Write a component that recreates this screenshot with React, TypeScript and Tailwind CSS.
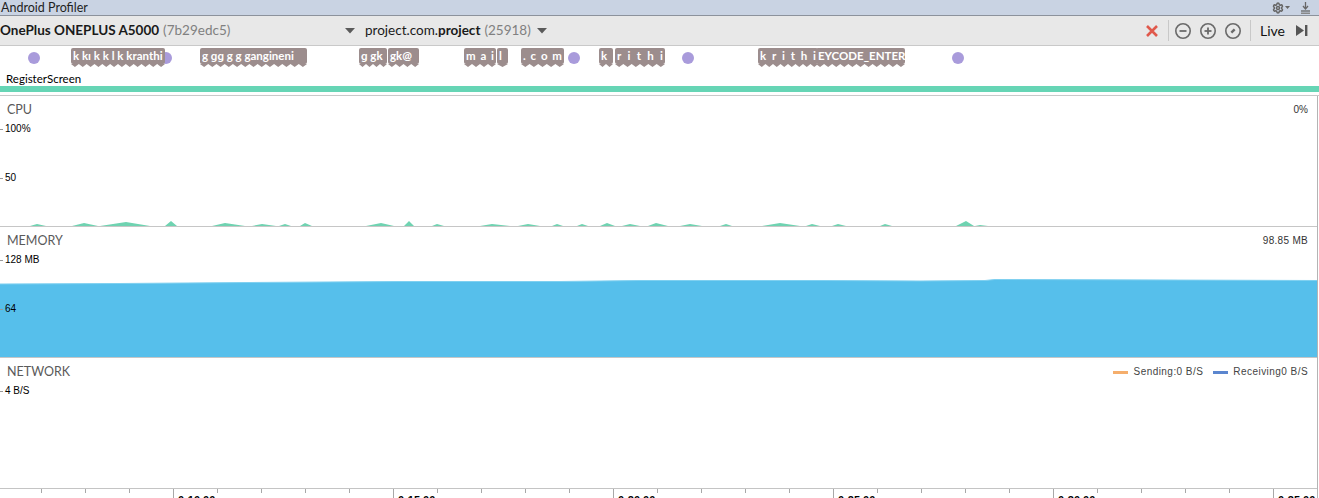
import { Settings } from 'lucide-react';

const ui = { fontFamily: 'Lato, "Open Sans", sans-serif' };
const arial = { fontFamily: '"Liberation Sans", Arial, sans-serif' };

// [start, peak, end, height] of each bump in the cpu graph
const cpuBumps: [number, number, number, number][] = [
  [30, 37, 46, 2], [72, 84, 98, 3], [100, 126, 150, 4], [165, 171, 177, 5],
  [212, 225, 245, 3], [252, 262, 276, 2], [279, 285, 291, 2], [300, 305, 312, 3],
  [366, 381, 394, 3], [404, 409, 414, 5], [432, 437, 444, 2], [480, 492, 510, 2],
  [518, 528, 540, 2], [552, 557, 563, 2], [577, 582, 588, 2], [600, 607, 615, 3],
  [622, 630, 640, 2], [648, 656, 668, 3], [680, 690, 702, 2], [720, 726, 732, 2],
  [762, 780, 800, 3], [806, 812, 820, 2], [832, 838, 846, 2], [880, 885, 892, 2],
  [956, 966, 974, 5], [975, 980, 988, 1],
];

function cpuPath() {
  let d = 'M0 130';
  for (const [s, p, e, h] of cpuBumps) {
    d += ` L${s} 130 L${p} ${130 - h} L${e} 130`;
  }
  return d + ' L1316 130 Z';
}

const chips = [
  { x: 71, w: 94, text: 'k kı k k l k kranthi' },
  { x: 200, w: 107, text: 'g ɡɡ g  g gangineni' },
  { x: 359, w: 28, text: 'ɡ gk' },
  { x: 388, w: 31, text: 'gk@' },
  { x: 464, w: 32, text: 'm a i', spread: true },
  { x: 497, w: 11, text: 'l' },
  { x: 521, w: 43, text: '. c o m', spread: true },
  { x: 599, w: 14, text: 'k' },
  { x: 615, w: 50, text: 'r i t h i', spread: true },
  { x: 758, w: 60, text: 'k r i t h i', spread: true },
  { x: 816, w: 89, text: 'EYCODE_ENTER' },
];

const dots = [34, 166, 574, 688, 958];

const majors = [
  { x: 173, label: '0:10.00' },
  { x: 393, label: '0:15.00' },
  { x: 613, label: '0:20.00' },
  { x: 833, label: '0:25.00' },
  { x: 1053, label: '0:30.00' },
  { x: 1273, label: '0:35.00' },
];

function Chip({ x, w, text, spread }: { x: number; w: number; text: string; spread?: boolean }) {
  const n = Math.max(1, Math.round(w / 8));
  let d = `M0 0 L${w} 0`;
  for (let i = n; i > 0; i--) {
    const a = (w / n) * i;
    const b = (w / n) * (i - 1);
    d += ` L${a} 0 L${(a + b) / 2} 3 L${b} 0`;
  }
  return (
    <div className="absolute top-[48px]" style={{ left: x, width: w }}>
      <div
        className="h-[16px] rounded-[2px] bg-[#9c8d8d] text-white text-[11.5px] font-bold leading-[16px] px-[2px] whitespace-nowrap overflow-hidden flex justify-between"
        style={ui}
      >
        {spread ? text.split(' ').map((c, i) => <span key={i}>{c}</span>) : <span>{text}</span>}
      </div>
      <svg width={w} height={4} className="block">
        <path d={d} fill="#9c8d8d" />
      </svg>
    </div>
  );
}

function ZoomIcon({ kind }: { kind: 'minus' | 'plus' | 'reset' }) {
  return (
    <svg width="18" height="18" viewBox="0 0 18 18">
      <circle cx="9" cy="9" r="7.2" fill="none" stroke="#6a6a6a" strokeWidth="1.6" />
      {kind !== 'reset' && <line x1="5.5" y1="9" x2="12.5" y2="9" stroke="#6a6a6a" strokeWidth="1.8" />}
      {kind === 'plus' && <line x1="9" y1="5.5" x2="9" y2="12.5" stroke="#6a6a6a" strokeWidth="1.8" />}
      {kind === 'reset' && (
        <path d="M6.5 9.8 L9.8 6.5 L11.5 8.2 L8.2 11.5 Z" fill="#6a6a6a" />
      )}
    </svg>
  );
}

function Section({
  title,
  right,
  top,
  mid,
  children,
}: {
  title: string;
  right?: React.ReactNode;
  top: string;
  mid?: string;
  children?: React.ReactNode;
}) {
  return (
    <div className="relative h-[131px] border-b border-[#c6c6c6]">
      {children}
      <div className="relative flex justify-between items-start pl-[7px] pr-[9px] pt-[6px]">
        <span className="text-[12.5px] leading-[16px] text-[#5a5a5a]" style={ui}>
          {title}
        </span>
        {right}
      </div>
      <div className="absolute left-0 top-[27px] flex items-center gap-[2px] text-[10px] leading-[12px] text-black" style={arial}>
        <span className="w-[3px] h-px bg-[#999]" />
        {top}
      </div>
      {mid && (
        <div className="absolute left-0 top-[76px] flex items-center gap-[2px] text-[10px] leading-[12px] text-black" style={arial}>
          <span className="w-[3px] h-px bg-[#999]" />
          {mid}
        </div>
      )}
    </div>
  );
}

export default function App() {
  return (
    <div className="w-[1319px] h-[498px] overflow-hidden bg-white flex flex-col">
      {/* window title */}
      <div className="h-[16px] shrink-0 bg-[#c9d3e3] border-b border-[#8c929c] flex items-center justify-between pl-[1px] pr-[8px]">
        <span className="text-[12.5px] leading-[15px] text-[#1f1f1f]" style={ui}>
          Android Profiler
        </span>
        <div className="flex items-center gap-[10px] text-[#666]">
          <div className="flex items-center gap-[1px]">
            <Settings size={12} strokeWidth={3} />
            <svg width="5" height="3" viewBox="0 0 5 3">
              <path d="M0 0 L5 0 L2.5 3 Z" fill="#666" />
            </svg>
          </div>
          <svg width="11" height="12" viewBox="0 0 11 12">
            <line x1="5.5" y1="0" x2="5.5" y2="6" stroke="#666" strokeWidth="1.3" />
            <path d="M3 4 L5.5 7 L8 4" fill="none" stroke="#666" strokeWidth="1.3" />
            <line x1="1" y1="9" x2="10" y2="9" stroke="#666" strokeWidth="1.3" />
            <rect x="1" y="10.5" width="9" height="1.5" fill="#888" />
          </svg>
        </div>
      </div>

      {/* toolbar */}
      <div className="h-[30px] shrink-0 bg-[#e8e8e8] border-b border-[#c9c9c9] flex items-center" style={ui}>
        <div className="w-[345px] flex items-baseline text-[13.5px] whitespace-nowrap">
          <span className="font-bold text-[#1a1a1a]">OnePlus ONEPLUS A5000</span>
          <span className="ml-[4px] text-[#808080]">(7b29edc5)</span>
        </div>
        <svg width="10" height="6" viewBox="0 0 10 6">
          <path d="M0 0 L10 0 L5 5.5 Z" fill="#5a5a5a" />
        </svg>
        <div className="ml-[10px] flex items-baseline text-[13.5px] whitespace-nowrap">
          <span className="text-[#1a1a1a]">project.com.</span>
          <span className="font-bold text-[#1a1a1a]">project</span>
          <span className="ml-[4px] text-[#808080]">(25918)</span>
        </div>
        <svg className="ml-[6px]" width="10" height="6" viewBox="0 0 10 6">
          <path d="M0 0 L10 0 L5 5.5 Z" fill="#5a5a5a" />
        </svg>

        <div className="ml-auto mr-[11px] flex items-center h-full">
          <svg width="14" height="14" viewBox="0 0 14 14">
            <path d="M2 2 L12 12 M12 2 L2 12" stroke="#e0594c" strokeWidth="2.6" />
          </svg>
          <div className="w-px h-[21px] bg-[#c8c8c8] ml-[9px] mr-[5px]" />
          <div className="flex items-center gap-[7px]">
            <ZoomIcon kind="minus" />
            <ZoomIcon kind="plus" />
            <ZoomIcon kind="reset" />
          </div>
          <div className="w-px h-[21px] bg-[#c8c8c8] ml-[8px] mr-[9px]" />
          <span className="text-[14px] text-[#111]">Live</span>
          <svg className="ml-[10px]" width="13" height="13" viewBox="0 0 13 13">
            <path d="M1 1 L9 6.5 L1 12 Z" fill="#555" />
            <rect x="10" y="1" width="2.4" height="11" fill="#555" />
          </svg>
        </div>
      </div>

      {/* events */}
      <div className="relative h-[50px] shrink-0 border-b border-[#c9c9c9]">
        {dots.map((x) => (
          <span
            key={x}
            className="absolute w-[12px] h-[12px] rounded-full bg-[#a99bdb]"
            style={{ left: x - 6, top: 6 }}
          />
        ))}
        <div className="absolute inset-0 -top-[46px]">
          {chips.map((c) => (
            <Chip key={c.x} {...c} />
          ))}
        </div>
        <div className="absolute left-[6px] top-[26px] text-[11.5px] leading-[14px] text-black" style={ui}>
          RegisterScreen
        </div>
        <div className="absolute left-0 right-0 top-[40px] h-[6px] bg-[#66d5b5]" />
      </div>

      {/* monitors */}
      <div className="w-[1318px] border-r border-[#b4b4b4] flex-1 flex flex-col">
        <Section
          title="CPU"
          top="100%"
          mid="50"
          right={<span className="text-[10px] leading-[16px] text-[#333]" style={arial}>0%</span>}
        >
          <svg className="absolute left-0 top-0" width="1317" height="130" viewBox="0 0 1317 130">
            <path d={cpuPath()} fill="#6fd3b1" />
          </svg>
        </Section>

        <Section
          title="MEMORY"
          top="128 MB"
          mid="64"
          right={<span className="text-[10px] leading-[16px] text-[#333] tracking-[0.3px]" style={arial}>98.85 MB</span>}
        >
          <svg className="absolute left-0 top-0" width="1317" height="130" viewBox="0 0 1317 130">
            <path
              d="M0 57 L120 56.5 L250 55.5 L400 54.5 L560 54.5 L640 53.5 L820 53.5 L920 54 L985 53.5 L995 52.5 L1317 53.5 L1317 130 L0 130 Z"
              fill="#56bfeb"
            />
            <path
              d="M0 57 L120 56.5 L250 55.5 L400 54.5 L560 54.5 L640 53.5 L820 53.5 L920 54 L985 53.5 L995 52.5 L1317 53.5"
              fill="none"
              stroke="#7fd0f0"
              strokeWidth="1"
            />
          </svg>
        </Section>

        <div className="relative h-[130px]">
          <div className="flex justify-between items-start pl-[7px] pr-[9px] pt-[6px]">
            <span className="text-[12.5px] leading-[16px] text-[#5a5a5a]" style={ui}>
              NETWORK
            </span>
            <div className="flex items-center text-[10px] leading-[16px] text-[#444] tracking-[0.45px]" style={arial}>
              <span className="w-[15px] h-[3px] bg-[#f5ae6c] mr-[6px]" />
              Sending:0 B/S
              <span className="w-[15px] h-[3px] bg-[#5b86cf] ml-[10px] mr-[5px]" />
              Receiving0 B/S
            </div>
          </div>
          <div className="absolute left-0 top-[27px] flex items-center gap-[2px] text-[10px] leading-[12px] text-black" style={arial}>
            <span className="w-[3px] h-px bg-[#999]" />
            4 B/S
          </div>
        </div>

        {/* time axis */}
        <div className="relative flex-1 border-t border-[#c4c4c4]">
          <svg className="absolute left-0 top-0" width="1317" height="10" viewBox="0 0 1317 10">
            {Array.from({ length: 30 }, (_, i) => 41 + i * 44)
              .filter((x) => x < 1317)
              .map((x, i) => (
                <line
                  key={x}
                  x1={x + 0.5}
                  y1="0"
                  x2={x + 0.5}
                  y2={i % 5 === 3 ? 10 : 4}
                  stroke="#a8a8a8"
                  strokeWidth="1"
                />
              ))}
          </svg>
          {majors.map((m) => (
            <span
              key={m.x}
              className="absolute top-[5px] text-[11px] leading-[12px] text-black font-bold"
              style={{ ...arial, left: m.x + 5 }}
            >
              {m.label}
            </span>
          ))}
        </div>
      </div>
    </div>
  );
}
